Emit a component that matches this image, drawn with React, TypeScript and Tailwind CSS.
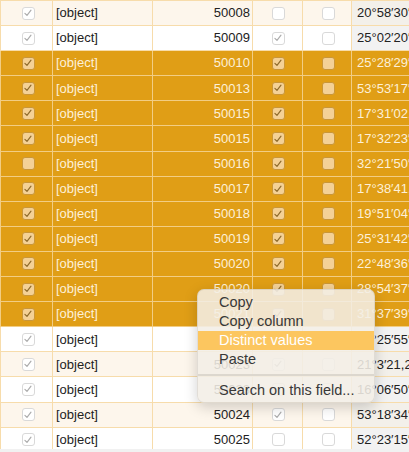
import React from 'react';

type Row = {
  a: boolean;
  num: string;
  d: boolean;
  e: boolean;
  coord: string;
  sel: boolean;
};

const rows: Row[] = [
  { a: true, num: '50008', d: false, e: false, coord: '20°58′30″', sel: false },
  { a: true, num: '50009', d: true, e: false, coord: '25°02′20″', sel: false },
  { a: true, num: '50010', d: true, e: false, coord: '25°28′29″', sel: true },
  { a: true, num: '50013', d: true, e: false, coord: '53°53′17″', sel: true },
  { a: true, num: '50015', d: true, e: false, coord: '17°31′02,', sel: true },
  { a: true, num: '50015', d: true, e: false, coord: '17°32′23″', sel: true },
  { a: false, num: '50016', d: true, e: false, coord: '32°21′50″', sel: true },
  { a: true, num: '50017', d: true, e: false, coord: '17°38′41,', sel: true },
  { a: true, num: '50018', d: true, e: false, coord: '19°51′04″', sel: true },
  { a: true, num: '50019', d: true, e: false, coord: '25°31′42″', sel: true },
  { a: true, num: '50020', d: true, e: false, coord: '22°48′36″', sel: true },
  { a: true, num: '50020', d: true, e: false, coord: '28°54′37″', sel: true },
  { a: true, num: '50021', d: true, e: false, coord: '31°37′39″', sel: true },
  { a: true, num: '50022', d: false, e: false, coord: '44°25′55″', sel: false },
  { a: true, num: '50023', d: true, e: false, coord: '21°3′21,2', sel: false },
  { a: true, num: '50023', d: false, e: false, coord: '16°06′50″', sel: false },
  { a: true, num: '50024', d: true, e: false, coord: '53°18′34″', sel: false },
  { a: true, num: '50025', d: false, e: false, coord: '52°23′15″', sel: false },
];

const Check: React.FC<{ on: boolean; sel: boolean }> = ({ on, sel }) => (
  <span
    className={
      sel
        ? 'flex items-center justify-center w-[13px] h-[13px] rounded-[3px] border border-[#c99638] bg-[#f4d196]'
        : 'flex items-center justify-center w-[13px] h-[13px] rounded-[3px] border border-[#d9d9d9] bg-white'
    }
  >
    {on && (
      <svg viewBox="0 0 12 12" className="w-[10px] h-[10px]">
        <path
          d="M2.3 6.4 L4.8 8.9 L9.6 2.6"
          fill="none"
          stroke={sel ? '#8d6a2c' : '#acacac'}
          strokeWidth="1.4"
          strokeLinecap="round"
          strokeLinejoin="round"
        />
      </svg>
    )}
  </span>
);

const menuItems = ['Copy', 'Copy column', 'Distinct values', 'Paste'];

export default function App() {
  return (
    <div
      className="relative w-[409px] h-[452px] overflow-hidden bg-white text-[13px]"
      style={{ fontFamily: '"Liberation Sans", Arial, sans-serif' }}
    >
      <div className="border-t border-[#f7dcab] w-[470px]">
        {rows.map((r, i) => {
          const bg = r.sel ? 'bg-[#e09e16]' : i % 2 === 0 ? 'bg-[#fdf6ec]' : 'bg-white';
          const line = r.sel ? 'border-[#f2cd84]' : 'border-[#f7dcab]';
          const text = r.sel ? 'text-[#fdf0d8]' : 'text-[#222222]';
          const coordBg = r.sel ? '' : i % 2 === 0 ? 'bg-[#f3f0ea]' : 'bg-[#f2f2f2]';
          return (
            <div key={i} className={`flex h-[25.1px] border-b ${line} ${bg} ${text}`}>
              <div className={`w-[53px] flex items-center justify-center pl-[3px] border-l border-r ${line}`}>
                <Check on={r.a} sel={r.sel} />
              </div>
              <div className={`w-[100px] flex items-center pl-[3px] border-r ${line}`}>[object]</div>
              <div className={`w-[100px] flex items-center justify-end pr-[2px] border-r ${line}`}>{r.num}</div>
              <div className={`w-[50px] flex items-center justify-center pl-[1px] border-r ${line}`}>
                <Check on={r.d} sel={r.sel} />
              </div>
              <div className={`w-[49px] flex items-center justify-center pl-[2px] border-r ${line}`}>
                <Check on={r.e} sel={r.sel} />
              </div>
              <div className={`flex-1 flex items-center pl-[5px] whitespace-nowrap ${coordBg}`}>{r.coord}</div>
            </div>
          );
        })}
      </div>
      <div className="absolute left-0 right-0 bottom-0 h-[3px] bg-[#f1f1f1]" />

      <div className="absolute left-[197px] top-[289px] w-[178px] h-[114px] rounded-[7px] bg-[rgba(242,238,230,0.88)] border border-[rgba(0,0,0,0.08)] shadow-[0_4px_14px_rgba(0,0,0,0.18)] py-[3px] overflow-hidden text-[14.5px] text-[#383838]">
        {menuItems.map((m) => (
          <div
            key={m}
            className={
              m === 'Distinct values'
                ? 'h-[19px] flex items-center pl-[21px] bg-[#fcc65f] text-white'
                : 'h-[19px] flex items-center pl-[21px]'
            }
          >
            {m}
          </div>
        ))}
        <div className="h-[12px] flex items-center">
          <div className="w-full h-[1.5px] bg-[#dcd7ce]" />
        </div>
        <div className="h-[19px] flex items-center pl-[21px]">Search on this field...</div>
      </div>
    </div>
  );
}
